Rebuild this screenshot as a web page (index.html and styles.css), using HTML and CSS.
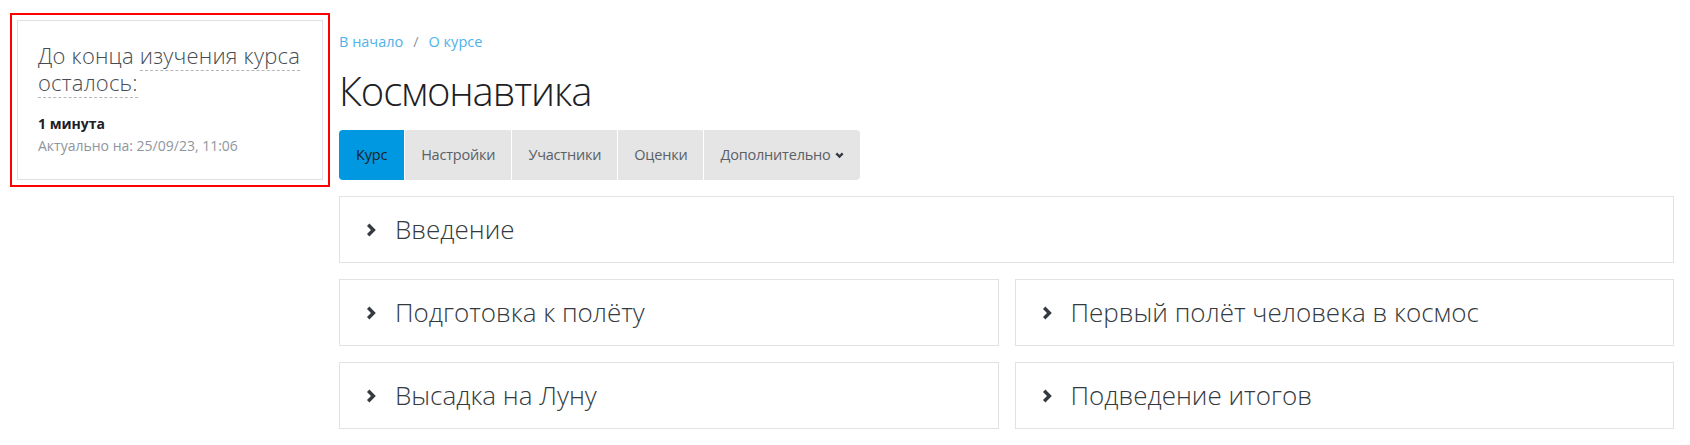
FILE: index.html
```html
<!DOCTYPE html>
<html lang="ru">
<head>
    <meta charset="UTF-8">
    <meta name="viewport" content="width=device-width, initial-scale=1.0">
    <title>Космонавтика</title>
    <link rel="stylesheet" href="styles.css">
</head>
<body>
    <div class="page">
        <aside class="sidebar">
            <div class="highlight">
                <div class="block">
                    <h5 class="block-title">До конца <span class="hint">изучения курса</span> <span class="hint">осталось:</span></h5>
                    <div class="remain">1 минута</div>
                    <div class="updated">Актуально на: 25/09/23, 11:06</div>
                </div>
            </div>
        </aside>

        <main class="content">
            <nav class="breadcrumb">
                <a href="#">В начало</a>
                <span class="sep">/</span>
                <a href="#">О курсе</a>
            </nav>

            <h1 class="course-title">Космонавтика</h1>

            <ul class="tabs">
                <li class="tab active">Курс</li>
                <li class="tab">Настройки</li>
                <li class="tab">Участники</li>
                <li class="tab">Оценки</li>
                <li class="tab">Дополнительно
                    <svg class="caret" width="9" height="7" viewBox="0 0 9 7"><polyline points="1.3,1.3 4.5,4.5 7.7,1.3" fill="none" stroke="#343a40" stroke-width="2.4"/></svg>
                </li>
            </ul>

            <div class="sections">
                <div class="section wide">
                    <svg class="chevron" width="10" height="14" viewBox="0 0 10 14"><polyline points="2.2,1.8 7.4,7 2.2,12.2" fill="none" stroke="#343a40" stroke-width="3.4"/></svg>
                    <span class="section-name">Введение</span>
                </div>
                <div class="section">
                    <svg class="chevron" width="10" height="14" viewBox="0 0 10 14"><polyline points="2.2,1.8 7.4,7 2.2,12.2" fill="none" stroke="#343a40" stroke-width="3.4"/></svg>
                    <span class="section-name">Подготовка к полёту</span>
                </div>
                <div class="section">
                    <svg class="chevron" width="10" height="14" viewBox="0 0 10 14"><polyline points="2.2,1.8 7.4,7 2.2,12.2" fill="none" stroke="#343a40" stroke-width="3.4"/></svg>
                    <span class="section-name">Первый полёт человека в космос</span>
                </div>
                <div class="section">
                    <svg class="chevron" width="10" height="14" viewBox="0 0 10 14"><polyline points="2.2,1.8 7.4,7 2.2,12.2" fill="none" stroke="#343a40" stroke-width="3.4"/></svg>
                    <span class="section-name">Высадка на Луну</span>
                </div>
                <div class="section">
                    <svg class="chevron" width="10" height="14" viewBox="0 0 10 14"><polyline points="2.2,1.8 7.4,7 2.2,12.2" fill="none" stroke="#343a40" stroke-width="3.4"/></svg>
                    <span class="section-name">Подведение итогов</span>
                </div>
            </div>
        </main>
    </div>
</body>
</html>
```

FILE: styles.css
```css
body {
    margin: 0;
    font-family: "Open Sans", "DejaVu Sans", sans-serif;
    font-size: 14px;
    line-height: 1.5;
    color: #1d2125;
    background: #fff;
}
.page {
    display: flex;
    gap: 9px;
    padding: 13px 16px 0 10px;
}
.sidebar {
    width: 320px;
    flex-shrink: 0;
}
.highlight {
    border: 2px solid #f00;
    padding: 5px;
}
.block {
    border: 1px solid #dee2e6;
    padding: 21px 20px 22px;
}
.block-title {
    margin: 0 0 17px;
    font-size: 22px;
    font-weight: 300;
    line-height: 27px;
    color: #464c52;
    letter-spacing: 0.2px;
}
.hint {
    border-bottom: 1px dashed #b5b5b5;
}
.remain {
    font-weight: 700;
    line-height: 22px;
}
.updated {
    color: #8f959e;
    line-height: 22px;
}
.content {
    flex: 1;
    padding-top: 18px;
}
.breadcrumb {
    display: flex;
    align-items: center;
    line-height: 21px;
    font-size: 14.5px;
}
.breadcrumb a {
    color: #4fb2ea;
    text-decoration: none;
}
.breadcrumb .sep {
    color: #8f959e;
    margin: 0 10px;
}
.course-title {
    margin: 15px 0 15px;
    font-size: 40px;
    font-weight: 300;
    line-height: 48px;
    letter-spacing: -1.1px;
}
.tabs {
    display: flex;
    gap: 1px;
    margin: 0 0 16px;
    padding: 0;
    list-style: none;
}
.tab {
    display: flex;
    align-items: center;
    gap: 4px;
    height: 50px;
    padding: 0 16px;
    background: #e5e5e5;
    color: #5a6066;
    font-size: 14.5px;
    letter-spacing: -0.2px;
}
.tab:first-child {
    border-radius: 4px 0 0 4px;
    padding: 0 17px;
}
.tab:last-child {
    border-radius: 0 4px 4px 0;
}
.tab.active {
    background: #0098e0;
    color: #1d2125;
}
.sections {
    display: grid;
    grid-template-columns: 1fr 1fr;
    gap: 16px;
}
.section {
    display: flex;
    align-items: center;
    height: 67px;
    box-sizing: border-box;
    padding-left: 26px;
    border: 1px solid #e2e2e2;
}
.section.wide {
    grid-column: span 2;
}
.chevron {
    flex-shrink: 0;
    margin-right: 19px;
}
.section-name {
    font-size: 26px;
    font-weight: 300;
    color: #343a40;
}
```
